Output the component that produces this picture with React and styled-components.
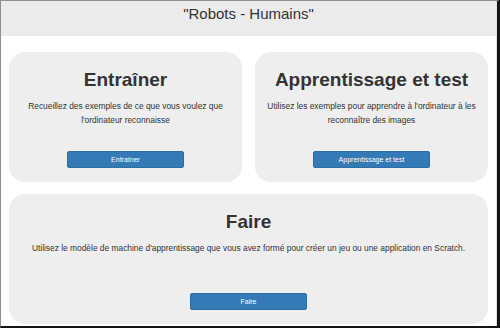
import React from "react";
import styled, { createGlobalStyle } from "styled-components";

const GlobalStyle = createGlobalStyle`
  html, body {
    margin: 0;
    padding: 0;
    background: #ffffff;
  }
  * { box-sizing: border-box; }
`;

const Frame = styled.div`
  width: 500px;
  height: 328px;
  overflow: hidden;
  border-left: 1px solid #8f8f8f;
  border-top: 1px solid #8f8f8f;
  border-right: 3px solid #151515;
  border-bottom: 2px solid #151515;
  font-family: "Liberation Sans", Arial, sans-serif;
  color: #333333;
  background: #ffffff;
`;

const Inner = styled.div`
  height: 100%;
  border-right: 1px solid #e2e2e2;
  display: flex;
  flex-direction: column;
`;

const Header = styled.header`
  height: 35px;
  flex: none;
  background: #ebebeb;
  padding-top: 4px;
  text-align: center;
  font-size: 15px;
  line-height: 17px;
  color: #333333;
`;

const Grid = styled.main`
  display: grid;
  grid-template-columns: 1fr 1fr;
  column-gap: 13px;
  row-gap: 12px;
  padding: 16px 8px 0;
`;

const Card = styled.section`
  grid-column: ${(p) => (p.$wide ? "1 / -1" : "auto")};
  background: #eeeeee;
  border-radius: 16px;
  padding: 17px 10px 14px;
  display: flex;
  flex-direction: column;
  align-items: center;
  text-align: center;
`;

const Title = styled.h2`
  margin: 0;
  font-size: 19px;
  line-height: 22px;
  font-weight: bold;
  color: #333333;
`;

const Description = styled.p`
  margin: 8px 0 0;
  min-height: 28px;
  font-size: 8.4px;
  line-height: 14px;
  color: #333333;
`;

const Button = styled.button`
  margin-top: 24px;
  width: 117px;
  height: 17px;
  padding: 0;
  background: #337ab7;
  border: 1px solid #2e6da4;
  border-radius: 2px;
  color: #ffffff;
  font-family: "Liberation Sans", Arial, sans-serif;
  font-size: 7px;
  line-height: 15px;
  cursor: pointer;
`;

const sections = [
  {
    title: "Entraîner",
    text: "Recueillez des exemples de ce que vous voulez que l'ordinateur reconnaisse",
    button: "Entraîner",
  },
  {
    title: "Apprentissage et test",
    text: "Utilisez les exemples pour apprendre à l'ordinateur à les reconnaître des images",
    button: "Apprentissage et test",
  },
  {
    title: "Faire",
    text: "Utilisez le modèle de machine d'apprentissage que vous avez formé pour créer un jeu ou une application en Scratch.",
    button: "Faire",
    wide: true,
  },
];

export default function App() {
  return (
    <>
      <GlobalStyle />
      <Frame>
        <Inner>
          <Header>"Robots - Humains"</Header>
          <Grid>
            {sections.map((s) => (
              <Card key={s.title} $wide={s.wide}>
                <Title>{s.title}</Title>
                <Description>{s.text}</Description>
                <Button>{s.button}</Button>
              </Card>
            ))}
          </Grid>
        </Inner>
      </Frame>
    </>
  );
}
